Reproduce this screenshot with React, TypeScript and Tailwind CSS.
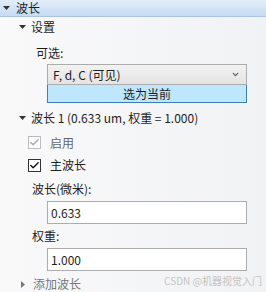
import { Check, ChevronDown } from "lucide-react";

const font = { fontFamily: '"Microsoft YaHei", "Noto Sans CJK SC", "Liberation Sans", sans-serif' };

const Down = ({ className = "" }: { className?: string }) => (
  <svg width="7" height="4" viewBox="0 0 7 4" className={className}>
    <path d="M0 0h7L3.5 4z" fill="#333" />
  </svg>
);

const Right = () => (
  <svg width="4" height="7" viewBox="0 0 4 7">
    <path d="M0 0v7l4-3.5z" fill="#777" />
  </svg>
);

const Box = ({ disabled }: { disabled?: boolean }) => (
  <span
    className={`flex h-[13px] w-[13px] items-center justify-center border bg-white ${
      disabled ? "border-[#bcbcbc] bg-[#f4f4f4]" : "border-[#333]"
    }`}
  >
    <Check size={11} strokeWidth={3} className={disabled ? "text-[#a8a8a8]" : "text-[#111]"} />
  </span>
);

export default function App() {
  return (
    <div
      className="h-[292px] w-[266px] overflow-hidden bg-gradient-to-r from-[#f9f9fa] to-[#f1f2f4] text-[12px] leading-[16px] text-[#1e1e1e]"
      style={font}
    >
      <div className="flex h-[17px] items-center gap-[6px] border-b border-[#a9c3e4] bg-gradient-to-b from-[#e3edf9] to-[#c6dbf3] pl-[3px]">
        <Down />
        <span className="leading-none">波长</span>
      </div>

      <div className="flex h-[20px] items-center gap-[5px] pl-[19px]">
        <Down />
        <span>设置</span>
      </div>

      <div className="flex h-[27px] items-center pl-[36px] pt-[4px]">可选:</div>

      <div className="ml-[47px] w-[200px]">
        <div className="flex h-[21px] items-center justify-between border border-[#acacac] bg-gradient-to-b from-[#f2f2f2] to-[#e4e4e4] pl-[5px] pr-[6px]">
          <span>F, d, C (可见)</span>
          <ChevronDown size={9} strokeWidth={3} className="text-[#555]" />
        </div>
        <div className="flex h-[18px] items-center justify-center border border-t-0 border-[#3c7fb1] bg-[#bee6fd]">
          选为当前
        </div>
      </div>

      <div className="flex h-[29px] items-center gap-[5px] pl-[19px]">
        <Down />
        <span>波长 1 (0.633 um, 权重 = 1.000)</span>
      </div>

      <div className="flex h-[21px] items-center gap-[9px] pl-[28px]">
        <Box disabled />
        <span className="text-[#666]">启用</span>
      </div>

      <div className="flex h-[24px] items-center gap-[9px] pl-[28px]">
        <Box />
        <span>主波长</span>
      </div>

      <div className="flex h-[24px] items-center pl-[32px]">波长(微米):</div>

      <div className="ml-[47px] flex h-[23px] w-[200px] items-center border border-[#acacac] bg-white pl-[3px]">
        0.633
      </div>

      <div className="flex h-[24px] items-center pl-[32px]">权重:</div>

      <div className="ml-[47px] flex h-[23px] w-[200px] items-center border border-[#acacac] bg-white pl-[3px]">
        1.000
      </div>

      <div className="relative flex h-[21px] items-center gap-[8px] pl-[21px] pt-[5px]">
        <Right />
        <span className="leading-[14px] text-[#777]">添加波长</span>
        <span className="absolute right-[4px] top-[4px] text-[10px] leading-[12px] text-[#c4c4c4]">
          CSDN @机器视觉入门
        </span>
      </div>
    </div>
  );
}
